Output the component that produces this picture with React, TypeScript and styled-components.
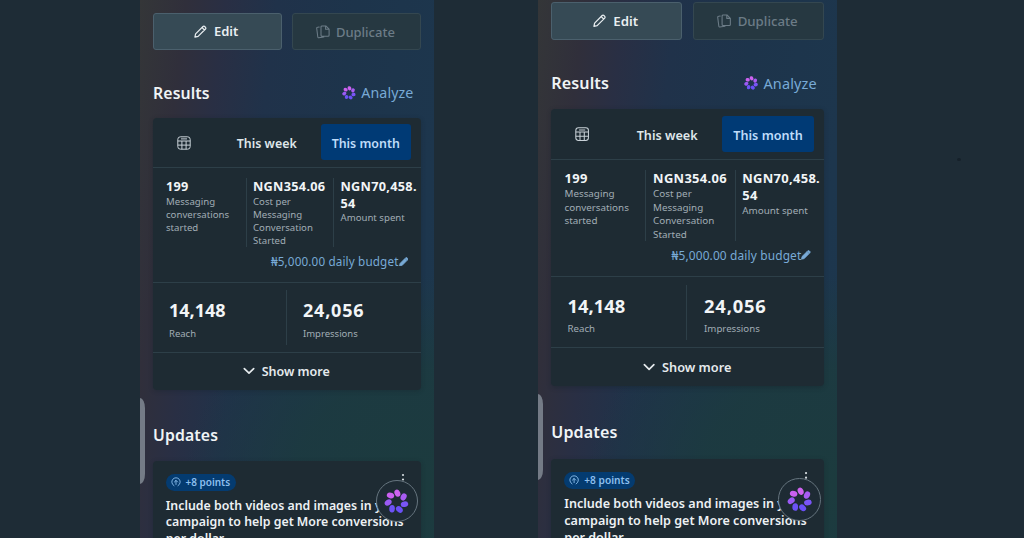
import React from "react";
import styled, { createGlobalStyle } from "styled-components";

const Global = createGlobalStyle`
  *{box-sizing:border-box}
  body{margin:0;background:#1e2c36;overflow:hidden;font-family:"Noto Sans","Open Sans",sans-serif}
`;

const Page = styled.main`
  display:flex;
  align-items:flex-start;
  width:1024px;
  height:538px;
  padding-left:140px;
  gap:104px;
  overflow:hidden;
  background:#1e2c36;
  position:relative;
`;

const Speck = styled.i`
  position:absolute;
  left:957px;
  top:158px;
  width:4px;
  height:3px;
  border-radius:50%;
  background:#16212a;
`;

const Frame = styled.div<{ $w: number }>`
  width:${(p) => p.$w}px;
  height:538px;
  flex:none;
  overflow:hidden;
  background:
    radial-gradient(ellipse 250px 210px at 100% 90%, #1c3b3e 0%, #1c3b3ecc 55%, #1c3b3e00 100%),
    linear-gradient(97deg, #343638 0%, #302f3b 13%, #292f44 24%, #20324a 38%, #1d344b 60%, #1d374e 100%);
  position:relative;
`;

const Screen = styled.div<{ $zoom: number; $top: number }>`
  zoom:${(p) => p.$zoom};
  width:294px;
  padding:${(p) => p.$top}px 13px 0 12.5px;
  display:flex;
  flex-direction:column;
`;

const Buttons = styled.div`
  display:flex;
  gap:10px;
  height:36.5px;
`;

const Button = styled.button<{ $muted?: boolean }>`
  flex:1;
  display:flex;
  align-items:center;
  justify-content:center;
  gap:${(p) => (p.$muted ? 6 : 7)}px;
  padding:${(p) => (p.$muted ? "1px 2px 0 0" : "0 2px 0 0")};
  border:1px solid ${(p) => (p.$muted ? "#344750" : "#4b606d")};
  border-radius:3px;
  background:${(p) => (p.$muted ? "#263841" : "#364a55")};
  color:${(p) => (p.$muted ? "#6c7c87" : "#e9eef1")};
  font-family:"Noto Sans",sans-serif;
  font-size:13px;
  font-weight:${(p) => (p.$muted ? 500 : 600)};
`;

const Heading = styled.h2`
  margin:0;
  padding-left:.5px;
  font-size:15.8px;
  line-height:20px;
  font-weight:600;
  letter-spacing:.12px;
  color:#f0f4f6;
`;

const ResultsHead = styled.div`
  display:flex;
  align-items:center;
  justify-content:space-between;
  margin-top:33px;
  height:20px;
  padding-right:7.5px;
`;

const Link = styled.span`
  display:flex;
  align-items:center;
  gap:5.5px;
  color:#78aad6;
  font-size:14.2px;
  letter-spacing:.12px;
`;

const Card = styled.section`
  background:#1e2b33;
  border-radius:4px;
  box-shadow:0 1px 4px #17232b66;
`;

const ResultsCard = styled(Card)`
  margin-top:15.5px;
`;

const Tabs = styled.div`
  display:flex;
  align-items:center;
  height:49.5px;
  padding:0 10px 0 24px;
  border-bottom:1px solid #2d3f48;
`;

const Tab = styled.span<{ $active?: boolean }>`
  display:flex;
  align-items:center;
  justify-content:center;
  width:${(p) => (p.$active ? 90.5 : 107.5)}px;
  height:36px;
  padding-top:2px;
  border-radius:3px;
  background:${(p) => (p.$active ? "#003a75" : "transparent")};
  color:${(p) => (p.$active ? "#bfdcfa" : "#dfe6ea")};
  font-size:12.4px;
  font-weight:600;
`;

const TabIcon = styled.span`
  display:flex;
  flex:1;
  padding-top:1px;
`;

const Metrics = styled.div`
  display:grid;
  grid-template-columns:80px 87.5px 1fr;
  height:68px;
  margin:10.5px 0 0 13px;
`;

const Metric = styled.div<{ $divided?: boolean }>`
  border-left:${(p) => (p.$divided ? "1px solid #2d3f48" : "0")};
  padding-left:${(p) => (p.$divided ? 6.5 : 0.5)}px;
  color:#a1adb5;
  font-size:9.65px;
  line-height:13.2px;
  white-space:nowrap;
`;

const MetricValue = styled.div`
  color:#f2f5f7;
  font-size:12.7px;
  font-weight:700;
  line-height:16.5px;
  letter-spacing:.3px;
`;

const Budget = styled.div`
  display:flex;
  align-items:center;
  justify-content:flex-end;
  height:37px;
  padding:0 13px 5.5px 0;
  border-bottom:1px solid #2d3f48;
  color:#78aad6;
  font-size:11.7px;
  letter-spacing:.14px;
`;

const Totals = styled.div`
  display:grid;
  grid-template-columns:133px 1fr;
  height:69.5px;
  padding:7px 0;
  border-bottom:1px solid #2d3f48;
`;

const Total = styled.div<{ $divided?: boolean }>`
  padding-left:16.5px;
  border-left:${(p) => (p.$divided ? "1px solid #2d3f48" : "0")};
  color:#a1adb5;
  font-size:9.5px;
  line-height:16px;
`;

const TotalValue = styled.div<{ $spacing?: number }>`
  height:34px;
  padding-top:7px;
  margin-bottom:1.5px;
  color:#f2f5f7;
  font-size:18px;
  font-weight:700;
  line-height:27px;
  letter-spacing:${(p) => p.$spacing ?? 0}px;
`;

const ShowMore = styled.div`
  display:flex;
  align-items:center;
  justify-content:center;
  gap:7px;
  height:37.5px;
  padding-right:1px;
  color:#e5eaed;
  font-size:12.5px;
  font-weight:600;
`;

const UpdatesHeading = styled(Heading)`
  margin-top:35px;
`;

const Update = styled(Card)`
  position:relative;
  height:130px;
  margin-top:16px;
  padding:13px 0 0 13px;
`;

const Badge = styled.span`
  display:flex;
  align-items:center;
  justify-content:center;
  gap:4.5px;
  width:70px;
  height:16.5px;
  border-radius:9px;
  background:#043b70;
  color:#8cbfee;
  font-size:10px;
  font-weight:600;
`;

const Advice = styled.p`
  margin:7px 0 0;
  padding-left:.3px;
  color:#edf1f4;
  font-size:12.35px;
  font-weight:600;
  line-height:16.5px;
  white-space:nowrap;
`;

const Kebab = styled.svg`
  position:absolute;
  right:16px;
  top:11px;
`;

const Assistant = styled.div`
  position:absolute;
  right:3.5px;
  top:19px;
  width:42px;
  height:42px;
  border:1px solid #66757f;
  border-radius:50%;
  background:#1e2b34;
  display:flex;
  align-items:center;
  justify-content:center;
`;

const Thumb = styled.i<{ $top: number }>`
  position:absolute;
  left:0;
  top:${(p) => p.$top}px;
  width:5px;
  height:86px;
  border-radius:0 5px 5px 0 / 0 10px 10px 0;
  background:#747b86;
`;

const petals = ["#cf63f0", "#a95cf3", "#7a55f7", "#6a50f7", "#6c52f6", "#9a5af4", "#cb60f0"];

function Flower({ size, small }: { size: number; small?: boolean }) {
  return (
    <svg width={size} height={size} viewBox="0 0 24 24">
      {petals.map((c, i) => (
        <ellipse
          key={i}
          cx="12"
          cy="3.9"
          rx={small ? 3 : 2.7}
          ry="3.6"
          fill={c}
          transform={`rotate(${6 + (i * 360) / 7} 12 12) rotate(-29 12 3.9)`}
        />
      ))}
    </svg>
  );
}

function Pencil() {
  return (
    <svg width="13" height="13" viewBox="0 0 13 13" fill="none" stroke="currentColor" strokeWidth="1.2" strokeLinejoin="round">
      <path d="M.9 12.1l.7-3.2L9 1.5a1.2 1.2 0 0 1 1.7 0l.8.8a1.2 1.2 0 0 1 0 1.7L4.100 11.400zM8 2.500l2.500 2.500" />
    </svg>
  );
}

function Copies() {
  return (
    <svg width="14" height="14" viewBox="0 0 14 14" fill="none" stroke="currentColor" strokeWidth="1.05" strokeLinejoin="round" strokeLinecap="round">
      <path d="M6 .9h3.8l3.3 3.3v6a1 1 0 0 1-1 1H6a1 1 0 0 1-1-1V1.9a1 1 0 0 1 1-1zM9.6 1v3.3h3.3M3.2 2l-1.7.3a.9.9 0 0 0-.8 1l1.1 8.7a.9.9 0 0 0 1 .8l5-.7" />
    </svg>
  );
}

function TableIcon() {
  return (
    <svg width="14" height="14" viewBox="0 0 14 14" fill="none" stroke="#c9d2d8" strokeWidth="1">
      <rect x=".8" y=".8" width="12.4" height="12.4" rx="2.6" />
      <path d="M.8 5h12.4M.8 9.1h12.4M4.9 5v8.2M9.1 5v8.2M4 2.9h6" />
    </svg>
  );
}

function Phone({ zoom, top, width, thumb }: { zoom: number; top: number; width: number; thumb: number }) {
  return (
    <Frame $w={width}>
      <Screen $zoom={zoom} $top={top}>
        <Buttons>
          <Button><Pencil />Edit</Button>
          <Button $muted><Copies />Duplicate</Button>
        </Buttons>
        <ResultsHead>
          <Heading>Results</Heading>
          <Link><Flower size={14} small />Analyze</Link>
        </ResultsHead>
        <ResultsCard>
          <Tabs>
            <TabIcon><TableIcon /></TabIcon>
            <Tab>This week</Tab>
            <Tab $active>This month</Tab>
          </Tabs>
          <Metrics>
            <Metric><MetricValue>199</MetricValue>Messaging<br />conversations<br />started</Metric>
            <Metric $divided><MetricValue>NGN354.06</MetricValue>Cost per<br />Messaging<br />Conversation<br />Started</Metric>
            <Metric $divided><MetricValue>NGN70,458.<br />54</MetricValue>Amount spent</Metric>
          </Metrics>
          <Budget>
            ₦5,000.00 daily budget
            <svg width="9.5" height="9.5" viewBox="0 0 9 9" fill="currentColor" stroke="currentColor" strokeWidth=".6" strokeLinejoin="round"><path d="M.4 8.6l.5-2.500L5.600 1.400l2 2L2.900 8.100zM5.900 1.100l.6-.5a.8.8 0 0 1 1.100 0l.8.8a.8.8 0 0 1 0 1.100l-.5.6z" /></svg>
          </Budget>
          <Totals>
            <Total><TotalValue>14,148</TotalValue>Reach</Total>
            <Total $divided><TotalValue $spacing={0.8}>24,056</TotalValue>Impressions</Total>
          </Totals>
          <ShowMore>
            <svg width="12" height="8" viewBox="0 0 12 8" fill="none" stroke="currentColor" strokeWidth="1.7" strokeLinecap="round" strokeLinejoin="round"><path d="M1.3 1.7L6 6.2l4.7-4.5" /></svg>
            Show more
          </ShowMore>
        </ResultsCard>
        <UpdatesHeading>Updates</UpdatesHeading>
        <Update>
          <Badge>
            <svg width="10" height="10" viewBox="0 0 10 10" fill="none" stroke="currentColor" strokeWidth=".9" strokeLinecap="round"><path d="M3 8.7a4.2 4.2 0 1 1 4 0M5 7.5V3.5M3.4 5L5 3.4 6.6 5" /></svg>
            +8 points
          </Badge>
          <Advice>Include both videos and images in your<br />campaign to help get More conversions<br />per dollar.</Advice>
          <Kebab width="4" height="16" viewBox="0 0 4 16" fill="#d5dce0">
            <circle cx="2" cy="3" r="1.1" /><circle cx="2" cy="7.5" r="1.1" /><circle cx="2" cy="12" r="1.1" />
          </Kebab>
          <Assistant><Flower size={25} /></Assistant>
        </Update>
      </Screen>
      <Thumb $top={thumb} />
    </Frame>
  );
}

export default function App() {
  return (
    <Page>
      <Global />
      <Phone zoom={1} top={13} width={294} thumb={398} />
      <Phone zoom={1.019} top={2.3} width={299} thumb={394} />
      <Speck />
    </Page>
  );
}
